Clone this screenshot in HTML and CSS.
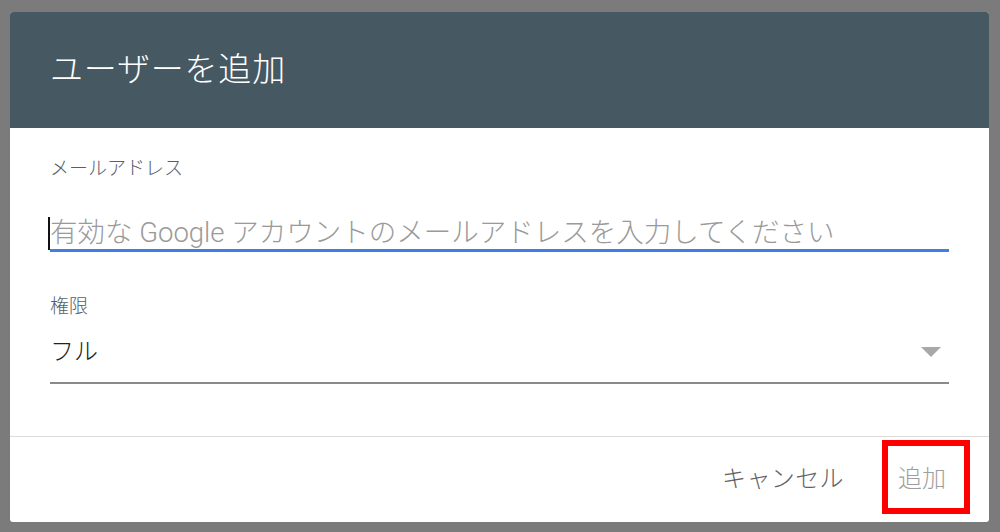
FILE: index.html
```html
<!DOCTYPE html>
<html lang="ja">
<head>
<meta charset="utf-8">
<title>ユーザーを追加</title>
<link rel="stylesheet" href="styles.css">
</head>
<body>
<div class="backdrop">
  <div class="dialog">
    <div class="dialog-header">
      <h1 class="dialog-title">ユーザーを追加</h1>
    </div>
    <div class="dialog-content">
      <div class="field-label label-email">メールアドレス</div>
      <div class="text-field">
        <span class="caret"></span><span class="placeholder">有効な Google アカウントのメールアドレスを入力してください</span>
      </div>
      <div class="field-label label-perm">権限</div>
      <div class="select-field">
        <span class="select-value">フル</span>
        <svg class="select-arrow" width="20" height="10" viewBox="0 0 20 10"><path d="M0 0 L20 0 L10 10 Z" fill="#a8a8a8"/></svg>
      </div>
    </div>
    <div class="dialog-footer">
      <span class="btn btn-cancel">キャンセル</span>
      <span class="highlight"><span class="btn btn-add">追加</span></span>
    </div>
  </div>
</div>
</body>
</html>
```
FILE: styles.css
```css
html, body {
  margin: 0;
  padding: 0;
}
body {
  width: 1000px;
  height: 532px;
  overflow: hidden;
  background: #7b7b7b;
  font-family: Roboto, "Noto Sans CJK JP", sans-serif;
}
.backdrop {
  padding: 12px 0 0 10px;
  border-top: 2px solid #747474;
  margin-top: -2px;
}
.dialog {
  width: 979px;
  height: 510px;
  background: #ffffff;
  border-radius: 3px;
  overflow: hidden;
  display: flex;
  flex-direction: column;
}
.dialog-header {
  height: 116px;
  flex: 0 0 116px;
  background: #465963;
  display: flex;
  align-items: center;
  padding: 0 40px;
}
.dialog-title {
  margin: 0;
  font-weight: 300;
  font-size: 33px;
  letter-spacing: 0.8px;
  line-height: 40px;
  color: #ffffff;
}
.dialog-content {
  flex: 1;
  padding: 29px 40px 0 40px;
}
.field-label {
  font-size: 19px;
  line-height: 24px;
  color: #56606a;
  font-weight: 300;
}
.text-field {
  margin-top: 36px;
  height: 32px;
  line-height: 32px;
  border-bottom: 3px solid #3d7fe6;
  white-space: nowrap;
  display: flex;
  align-items: center;
}
.caret {
  display: inline-block;
  width: 2px;
  height: 33px;
  background: #111;
  margin-left: -2px;
}
.placeholder {
  font-size: 27.5px;
  color: #9a9a9a;
  font-weight: 300;
}
.label-perm {
  margin-top: 43px;
}
.select-field {
  margin-top: 17px;
  height: 32px;
  padding-bottom: 14px;
  border-bottom: 2px solid #8a8a8a;
  display: flex;
  align-items: center;
  justify-content: space-between;
}
.select-value {
  font-size: 24px;
  line-height: 32px;
  color: #222;
  font-weight: 300;
}
.select-arrow {
  margin-right: 8px;
}
.dialog-footer {
  flex: 0 0 85px;
  border-top: 1px solid #dcdcdc;
  display: flex;
  justify-content: flex-end;
  align-items: flex-start;
  padding-right: 19px;
}
.btn {
  font-size: 24px;
  line-height: 24px;
  display: inline-block;
  font-weight: 300;
}
.btn-cancel {
  color: #5f6368;
  margin-top: 30px;
  margin-right: 38px;
  letter-spacing: 0.4px;
}
.highlight {
  margin-top: 3px;
  border: 6px solid #ff0000;
  width: 76px;
  height: 62px;
  box-sizing: content-box;
}
.btn-add {
  color: #9e9e9e;
  padding: 21px 0 0 10px;
}
```
